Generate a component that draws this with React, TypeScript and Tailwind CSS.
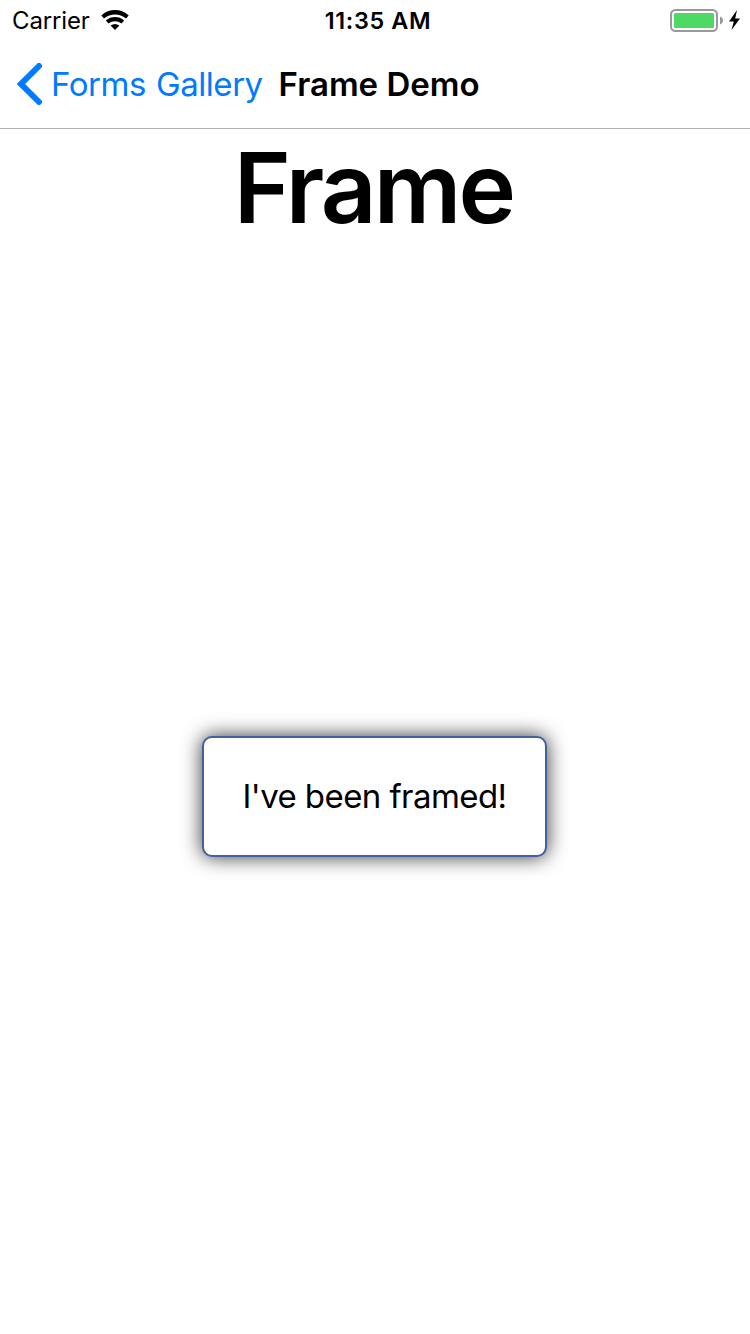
export default function App() {
  return (
    <div className="flex h-[1334px] w-[750px] flex-col bg-white font-['Inter',sans-serif] text-black">
      <header className="h-[129px] border-b border-[#b2b2b2]">
        <div className="grid h-10 grid-cols-3 items-center">
          <div className="flex items-center pl-3">
            <span className="w-[77px] text-[24px] leading-[41px] tracking-[-0.15px] whitespace-nowrap">Carrier</span>
            <svg className="mb-0.5 ml-3" width="28" height="20" viewBox="0 0 28 20">
              <path d="M0.3 5.4C8-1.8 20-1.8 27.7 5.4L25 8.5C18.5 3.3 9.5 3.3 3 8.5Z" />
              <path d="M4.8 10.4C10 5.9 18 5.9 23.2 10.4L20.5 13.6C16.5 10.4 11.5 10.4 7.5 13.6Z" />
              <path d="M9.6 15.6Q14 12.2 18.4 15.6L14 20Z" />
            </svg>
          </div>
          <span className="pl-1.5 text-center text-[23.4px] leading-[41px] font-semibold tracking-[0.65px] whitespace-nowrap">11:35 AM</span>
          <div className="flex items-center justify-end pr-[9px] pb-0.5">
            <svg width="71" height="26" viewBox="0 0 71 26">
              <rect x="1" y="3" width="46" height="21" rx="4.5" fill="none" stroke="#999" strokeWidth="2" />
              <rect x="4" y="6" width="40" height="15" rx="1.5" fill="#4cd964" />
              <path d="M50 9.5q3 1.2 3 4t-3 4z" fill="#999" />
              <path d="M67 3L59 14.5h4.8L61.5 23L70 11.6h-4.8z" />
            </svg>
          </div>
        </div>
        <div className="flex h-[88px] items-center pl-[17px] text-[33px]">
          <svg width="26" height="42" viewBox="0 0 26 42">
            <path d="M22 3L4 21L22 39" fill="none" stroke="#007aff" strokeWidth="6" strokeLinecap="round" />
          </svg>
          <span className="ml-2 w-[227.5px] pt-0.5 tracking-[-0.45px] [word-spacing:1.2px] whitespace-nowrap text-[#007aff]">Forms Gallery</span>
          <span className="pt-0.5 font-semibold whitespace-nowrap">Frame Demo</span>
        </div>
      </header>
      <main className="flex flex-1 flex-col items-center">
        <h1 className="h-[120px] pr-[3px] text-[97.3px] leading-[118px] font-semibold tracking-[-2.8px]">Frame</h1>
        <div className="mt-[487px] mr-px flex h-[121px] w-[345px] items-center justify-center rounded-[10px] border-2 border-[#4062a0] bg-white text-[33px] shadow-[0_0_20px_rgba(0,0,0,0.8)]">
          <span className="tracking-[-0.57px] whitespace-nowrap">I've been framed!</span>
        </div>
      </main>
    </div>
  );
}
